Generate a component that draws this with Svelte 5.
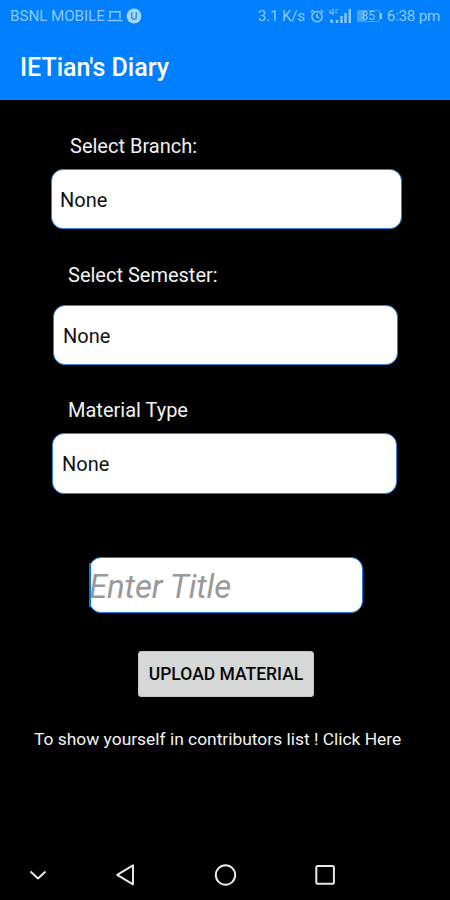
<script>
    let fields = [
        { name: 'branch', label: 'Select Branch:', value: 'None' },
        { name: 'semester', label: 'Select Semester:', value: 'None' },
        { name: 'material', label: 'Material Type', value: 'None' },
    ];
</script>

<div class="screen">
    <header>
        <div class="status">
            <span class="carrier">BSNL MOBILE</span>
            <svg class="laptop" width="16" height="12" viewBox="0 0 16 12">
                <path d="M3 8.5V1.7h10v6.8M.5 10.5h15" />
            </svg>
            <svg class="badge" width="16" height="16" viewBox="0 0 16 16">
                <circle cx="8" cy="8" r="7.4" />
                <path d="M5.7 4.2v4.7a2.3 2.3 0 0 0 4.6 0V4.2" />
            </svg>
            <span class="speed">3.1 K/s</span>
            <svg class="alarm" width="14" height="14" viewBox="0 0 14 14">
                <circle cx="7" cy="7.6" r="5.1" />
                <path d="M7 4.8v3l2 1.2M.8 3.2 3.4 1M13.2 3.2 10.6 1" />
            </svg>
            <svg class="signal" width="22" height="14" viewBox="0 0 22 14">
                <path d="M1 1v3h3M4 0v6M6 1h3M6 3.5h2M2 10v3" class="thin" />
                <path d="M3 11v3M8 11v3M12.5 7v7M16.5 4v10M20.8 0v14" />
            </svg>
            <span class="battery"><span class="level">85</span></span>
            <span class="time">6:38 pm</span>
        </div>
        <h1>IETian's Diary</h1>
    </header>

    <main>
        {#each fields as field}
            <div class="field {field.name}">
                <div class="label">{field.label}</div>
                <div class="select">{field.value}</div>
            </div>
        {/each}

        <div class="title-input"><span>Enter Title</span></div>
        <button>UPLOAD MATERIAL</button>
        <p>To show yourself in contributors list ! Click Here</p>
    </main>

    <nav>
        <svg width="100" height="24" viewBox="-12 0 100 24">
            <path d="m18.5 8.5 7.5 7 7.5-7" />
        </svg>
        <svg width="100" height="24" viewBox="0 0 100 24">
            <path d="M33 2.3v19L17.2 11.8Z" />
        </svg>
        <svg width="100" height="24" viewBox="0 0 100 24">
            <circle cx="25.5" cy="12" r="9.7" />
        </svg>
        <svg width="100" height="24" viewBox="0 0 100 24">
            <rect x="16.3" y="3" width="17.6" height="17.8" rx="1.5" />
        </svg>
    </nav>
</div>

<style>
    :global(body) {
        margin: 0;
        background: #000;
    }

    .screen {
        display: flex;
        flex-direction: column;
        width: 450px;
        height: 900px;
        overflow: hidden;
        background: #000;
        color: #f2f2f2;
        font-family: Roboto, sans-serif;
    }

    header {
        height: 100px;
        background: #0080ff;
    }

    .status {
        display: flex;
        align-items: center;
        height: 32px;
        padding: 0 10px;
        color: #8cc8fa;
        font-size: 15.2px;
        line-height: 32px;
        white-space: nowrap;
    }

    .status svg {
        flex: none;
        fill: none;
        stroke: #8cc8fa;
        stroke-width: 1.5;
    }

    .carrier {
        width: 97px;
        letter-spacing: -0.05px;
    }

    .badge {
        margin-left: 3px;
    }

    .status .badge circle {
        fill: #a5d5fc;
        stroke: none;
    }

    .status .badge path {
        stroke: #2d8ef0;
    }

    .speed {
        width: 52px;
        margin-left: auto;
        letter-spacing: -0.2px;
    }

    .signal {
        margin-left: 5px;
    }

    .status .signal path {
        stroke-width: 2.4;
    }

    .status .signal .thin {
        stroke-width: 1.2;
    }

    .battery {
        display: flex;
        align-items: center;
        margin: 0 5px 0 6px;
    }

    .level {
        width: 21px;
        height: 10px;
        border: 1px solid #4ba4fa;
        border-radius: 1px;
        background: linear-gradient(90deg, #4ba4fa 35%, transparent 35%);
        font-size: 12px;
        line-height: 11px;
        text-align: center;
    }

    .battery::after {
        content: '';
        width: 2px;
        height: 6px;
        background: #8cc8fa;
    }

    .time {
        letter-spacing: -0.25px;
    }

    h1 {
        margin: 20px 0 0 20px;
        color: #fff;
        font-size: 25px;
        font-weight: 500;
        line-height: 32px;
    }

    main {
        flex: 1;
    }

    .field {
        box-sizing: border-box;
        width: 345px;
    }

    .label {
        padding-left: 15px;
        font-size: 20px;
        line-height: 24px;
    }

    .select {
        box-sizing: border-box;
        height: 60px;
        padding-left: 9px;
        border: 1px solid #2f86da;
        border-radius: 12px;
        background: #fff;
        color: #111;
        font-size: 20px;
        line-height: 60px;
    }

    .branch {
        width: 351px;
        margin: 34px 0 0 51px;
    }

    .branch .label {
        padding-left: 19px;
    }

    .branch .select {
        margin-top: 11px;
        padding-left: 8px;
    }

    .semester {
        margin: 34px 0 0 53px;
    }

    .semester .select {
        margin-top: 18px;
    }

    .material {
        margin: 33px 0 0 52px;
    }

    .material .label {
        padding-left: 16px;
    }

    .material .select {
        height: 61px;
        margin-top: 11px;
        line-height: 61px;
    }

    .title-input {
        position: relative;
        box-sizing: border-box;
        width: 274px;
        height: 56px;
        margin: 63px 0 0 89px;
        border: 1px solid #1680ed;
        border-radius: 12px;
        background: #fff;
        color: #999;
        font-size: 33px;
        font-style: italic;
        letter-spacing: -0.15px;
        line-height: 57px;
        text-indent: -1px;
    }

    /* text cursor at the start of the empty field */
    .title-input::before {
        content: '';
        position: absolute;
        top: 5px;
        left: -1px;
        width: 2px;
        height: 44px;
        background: #0878e8;
    }

    button {
        display: block;
        width: 176px;
        height: 46px;
        margin: 38px 0 0 138px;
        padding: 0;
        border: 1px solid #c4c7c6;
        border-radius: 3px;
        background: #d6d8d7;
        color: #080808;
        font: 500 17.5px Roboto, sans-serif;
        white-space: nowrap;
    }

    p {
        margin: 31px 0 0 34px;
        font-size: 17.4px;
        line-height: 22px;
        white-space: nowrap;
    }

    nav {
        display: flex;
        height: 37px;
    }

    nav svg {
        fill: none;
        stroke: #e8e8e8;
        stroke-width: 2;
        stroke-linejoin: round;
    }
</style>
